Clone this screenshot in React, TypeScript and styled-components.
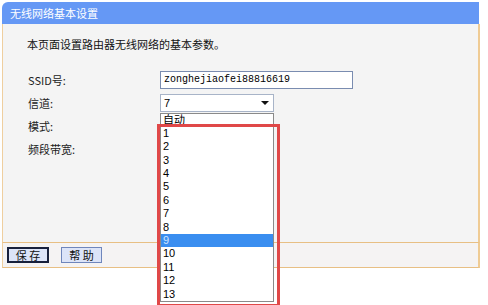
import React from "react";
import styled, { createGlobalStyle } from "styled-components";

const Global = createGlobalStyle`
  html, body { margin: 0; padding: 0; background: #ffffff; height: 100%; }
  body { font-family: "Noto Sans CJK SC", "Noto Sans", sans-serif; color: #111; }
  #root { height: 100%; }
`;

const Page = styled.div`
  width: 480px;
  height: 305px;
  box-sizing: border-box;
  padding: 2px 0 0 2px;
`;

const TitleBar = styled.div`
  height: 22px;
  background: #6598f5;
  border-radius: 6px 0 0 0;
  color: #fff;
  font-size: 11px;
  line-height: 22px;
  padding-left: 8px;
  margin-right: 1px;
`;

const Body = styled.div`
  height: 218px;
  box-sizing: border-box;
  background: #f4f4f4;
  border-left: 1px solid #efcf9f;
  border-right: 2px solid #efcb94;
  padding: 12px 0 0 24px;
`;

const Desc = styled.div`
  font-size: 11px;
  line-height: 16px;
  height: 16px;
  margin-bottom: 16px;
  color: #111;
`;

const Form = styled.div`
  display: grid;
  grid-template-columns: 133px 1fr;
  grid-auto-rows: 23px;
  align-items: center;
`;

const Label = styled.div`
  font-size: 11px;
  color: #222;
  padding-left: 1px;
`;

const TextInput = styled.div`
  width: 193px;
  height: 18px;
  box-sizing: border-box;
  border: 1px solid #7a8cb0;
  background: #fff;
  font-family: "Liberation Mono", monospace;
  font-size: 10px;
  line-height: 16px;
  padding-left: 3px;
  color: #000;
`;

const SelectWrap = styled.div`
  position: relative;
  width: 114px;
  height: 18px;
`;

const SelectBox = styled.div`
  width: 114px;
  height: 18px;
  box-sizing: border-box;
  border: 1px solid #a8b4c8;
  background: #fff;
  display: flex;
  align-items: center;
  justify-content: space-between;
  padding: 0 4px 0 3px;
  font-family: "Liberation Sans", sans-serif;
  font-size: 11px;
  color: #000;
`;

const Arrow = styled.span`
  width: 0;
  height: 0;
  border-left: 4px solid transparent;
  border-right: 4px solid transparent;
  border-top: 4px solid #111;
`;

const List = styled.div`
  position: absolute;
  left: 0;
  top: 19px;
  width: 114px;
  box-sizing: border-box;
  border: 1px solid #8a8a8a;
  background: #fff;
  z-index: 2;
`;

const Item = styled.div<{ $active?: boolean }>`
  height: 13.4px;
  line-height: 13.4px;
  padding-left: 2px;
  font-family: "Liberation Sans", "Noto Sans CJK SC", sans-serif;
  font-size: 11px;
  background: ${(p) => (p.$active ? "#3a8ef0" : "transparent")};
  color: ${(p) => (p.$active ? "#cfe4ff" : "#000")};
`;

const Highlight = styled.div`
  position: absolute;
  left: -4px;
  top: 10px;
  width: 123px;
  height: 183px;
  box-sizing: border-box;
  border: 3px solid #e04848;
  z-index: 3;
  pointer-events: none;
`;

const Footer = styled.div`
  height: 24px;
  border-top: 1px solid #e8bf84;
  border-bottom: 1px solid #e8bf84;
  border-left: 1px solid #efcf9f;
  border-right: 2px solid #efcb94;
  background: #f5f3f3;
  display: flex;
  align-items: center;
  gap: 12px;
  padding-left: 4px;
`;

const Button = styled.div<{ $focused?: boolean }>`
  height: 16px;
  box-sizing: border-box;
  padding: 0;
  background: #dce4f8;
  border: ${(p) => (p.$focused ? "2px solid #17203c" : "1px solid #6f86bc")};
  font-size: 11px;
  line-height: ${(p) => (p.$focused ? "12px" : "14px")};
  white-space: pre;
  color: #111;
  width: ${(p) => (p.$focused ? "42px" : "41px")};
  text-align: center;
`;

const channels = ["自动", "1", "2", "3", "4", "5", "6", "7", "8", "9", "10", "11", "12", "13"];

export default function App() {
  return (
    <>
      <Global />
      <Page>
        <TitleBar>无线网络基本设置</TitleBar>
        <Body>
          <Desc>本页面设置路由器无线网络的基本参数。</Desc>
          <Form>
            <Label>SSID号:</Label>
            <TextInput>zonghejiaofei88816619</TextInput>
            <Label>信道:</Label>
            <SelectWrap>
              <SelectBox>
                <span>7</span>
                <Arrow />
              </SelectBox>
              <List>
                {channels.map((c) => (
                  <Item key={c} $active={c === "9"}>
                    {c}
                  </Item>
                ))}
                <Highlight />
              </List>
            </SelectWrap>
            <Label>模式:</Label>
            <div />
            <Label>频段带宽:</Label>
            <div />
          </Form>
        </Body>
        <Footer>
          <Button $focused>{"保 存"}</Button>
          <Button>{"帮 助"}</Button>
        </Footer>
      </Page>
    </>
  );
}
